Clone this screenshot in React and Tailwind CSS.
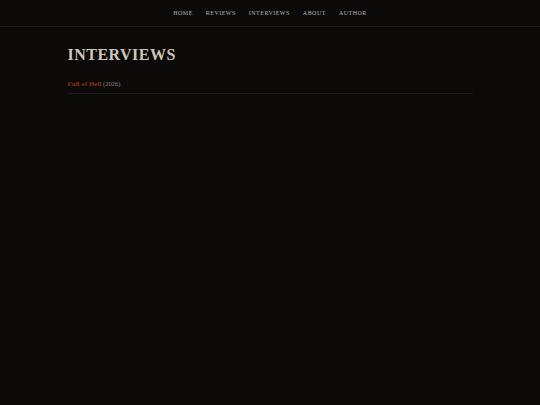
import React from 'react';

const navItems = ['Home', 'Reviews', 'Interviews', 'About', 'Author'];

const App = () => {
  return (
    <div className="min-h-screen bg-[#0b0a09] text-[#cfcac2]" style={{ fontFamily: '"Liberation Serif", "DejaVu Serif", serif' }}>
      <nav className="h-[27px] border-b border-[#1c1a18] flex justify-center items-center gap-[13px]">
        {navItems.map((item) => (
          <a key={item} href="#" className="uppercase text-[6px] tracking-[0.08em] text-[#b8b2aa] leading-none">
            {item}
          </a>
        ))}
      </nav>

      <main className="w-[405px] mx-auto pt-[17px]">
        <h1 className="text-[16px] font-bold uppercase tracking-[0.03em] text-[#cdc6ba] leading-[22px]">Interviews</h1>

        <div className="mt-[13px] pb-[4px] border-b border-[#1e1c1a] text-[7px] leading-[10px]">
          <a href="#" className="font-bold text-[#8f2a20]">Full of Hell</a>
          <span className="text-[6.5px] text-[#8a847c]"> (2026)</span>
        </div>
      </main>
    </div>
  );
};

export default App;
